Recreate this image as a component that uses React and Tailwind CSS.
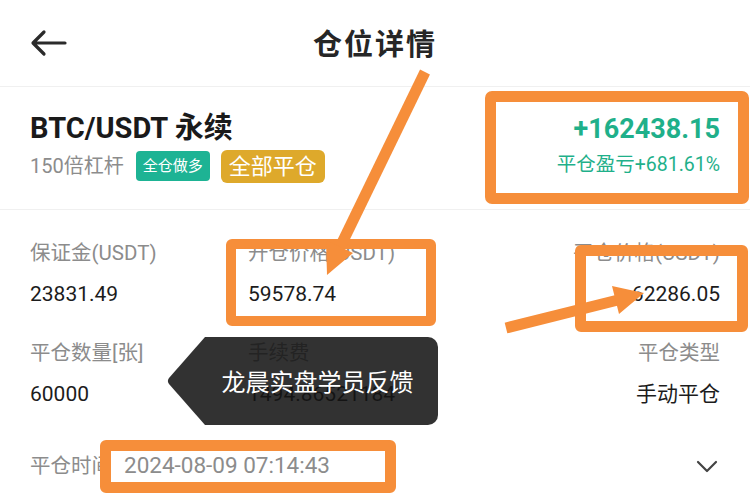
import React from 'react';

const ORANGE = '#f68e3a';

const Field = ({ label, value, align = 'left' }) => (
  <div className={align === 'right' ? 'flex flex-col items-end' : 'flex flex-col items-start'}>
    <div className="h-[28px] flex items-center text-[20.5px] text-[#8c8c8c]">{label}</div>
    <div className="h-[28px] mt-[14px] flex items-center text-[21px] text-[#1c1c1c]">{value}</div>
  </div>
);

const App = () => {
  return (
    <div
      className="relative w-[750px] h-[497px] overflow-hidden bg-white"
      style={{ fontFamily: 'Roboto, "Noto Sans CJK SC", sans-serif' }}
    >
      {/* nav bar */}
      <div className="h-[87px] flex items-center px-[30px] border-b border-[#f0f0f0]">
        <div className="w-[60px]">
          <svg width="38" height="28" viewBox="0 0 38 28" fill="none" stroke="#2b2b2b" strokeWidth="3.2" strokeLinecap="round" strokeLinejoin="round">
            <path d="M35 14H4M14 3L3 14l11 11" />
          </svg>
        </div>
        <div className="flex-1 text-center text-[29px] font-bold text-[#262626] tracking-[2px]" style={{ fontFamily: '"Noto Sans CJK SC", sans-serif' }}>
          仓位详情
        </div>
        <div className="w-[60px]" />
      </div>

      {/* summary */}
      <div className="flex justify-between px-[30px] pt-[27px] pb-[26px] border-b border-[#f0f0f0]">
        <div>
          <div className="h-[30px] flex items-center text-[29px] font-bold text-[#1a1a1a]">BTC/USDT 永续</div>
          <div className="h-[34px] mt-[5px] flex items-center gap-[11px]">
            <span className="text-[20px] text-[#8c8c8c] mr-[1px]">150倍杠杆</span>
            <span className="h-[30px] px-[7px] rounded-[4px] bg-[#1db394] text-white text-[15px] flex items-center">全仓做多</span>
            <span className="h-[33px] px-[8px] rounded-[6px] bg-[#dea92b] text-white text-[22px] flex items-center">全部平仓</span>
          </div>
        </div>
        <div className="flex flex-col items-end">
          <div className="h-[30px] flex items-center text-[27px] font-bold text-[#1fb08a]">+162438.15</div>
          <div className="h-[24px] mt-[9px] flex items-center text-[19.5px] text-[#1fb08a]">平仓盈亏+681.61%</div>
        </div>
      </div>

      {/* details */}
      <div className="px-[30px] pt-[29px]">
        <div className="grid grid-cols-[218px_1fr_auto]">
          <Field label="保证金(USDT)" value="23831.49" />
          <Field label="开仓价格(USDT)" value="59578.74" />
          <Field label="平仓价格(USDT)" value="62286.05" align="right" />
        </div>
        <div className="grid grid-cols-[218px_1fr_auto] mt-[30px]">
          <Field label="平仓数量[张]" value="60000" />
          <Field label="手续费" value="1494.86521184" />
          <Field label="平仓类型" value="手动平仓" align="right" />
        </div>
        <div className="mt-[43px] h-[28px] flex items-center justify-between">
          <div className="flex items-center gap-[12px] text-[#8c8c8c]">
            <span className="text-[20.5px]">平仓时间</span>
            <span className="text-[22.5px]">2024-08-09 07:14:43</span>
          </div>
          <svg width="22" height="14" viewBox="0 0 22 14" fill="none" stroke="#444" strokeWidth="2.2" strokeLinecap="round" strokeLinejoin="round" className="mr-[2px]">
            <path d="M2 3l9 9 9-9" />
          </svg>
        </div>
      </div>

      {/* annotation overlays */}
      <div className="absolute left-[485px] top-[91px] w-[264px] h-[113px] border-[11px] rounded-[7px]" style={{ borderColor: ORANGE }} />
      <div className="absolute left-[226px] top-[239px] w-[210px] h-[87px] border-[10px] rounded-[6px]" style={{ borderColor: ORANGE }} />
      <div className="absolute left-[575px] top-[245px] w-[173px] h-[87px] border-[11px] rounded-[6px]" style={{ borderColor: ORANGE }} />
      <div className="absolute left-[100px] top-[440px] w-[296px] h-[53px] border-[11px] rounded-[6px]" style={{ borderColor: ORANGE }} />

      <svg className="absolute left-0 top-0 pointer-events-none" width="750" height="497" viewBox="0 0 750 497">
        <line x1="425" y1="72" x2="342" y2="243" stroke={ORANGE} strokeWidth="11" />
        <polygon points="327,275 353,253 326,240" fill={ORANGE} />
        <line x1="506" y1="328" x2="618" y2="300" stroke={ORANGE} strokeWidth="11" />
        <polygon points="644,293 619,314 612,286" fill={ORANGE} />
      </svg>

      <div className="absolute left-[167px] top-[337px] w-[271px] h-[88px]">
        <svg className="absolute inset-0" width="271" height="88" viewBox="0 0 271 88">
          <path d="M38 0H261a10 10 0 0 1 10 10V78a10 10 0 0 1-10 10H38L2 47a5 5 0 0 1 0-6Z" fill="#141414" fillOpacity="0.87" />
        </svg>
        <div className="relative h-full pl-[30px] flex items-center justify-center text-white text-[24px]" style={{ fontFamily: '"Noto Sans CJK SC", sans-serif' }}>
          龙晨实盘学员反馈
        </div>
      </div>
    </div>
  );
};

export default App;
